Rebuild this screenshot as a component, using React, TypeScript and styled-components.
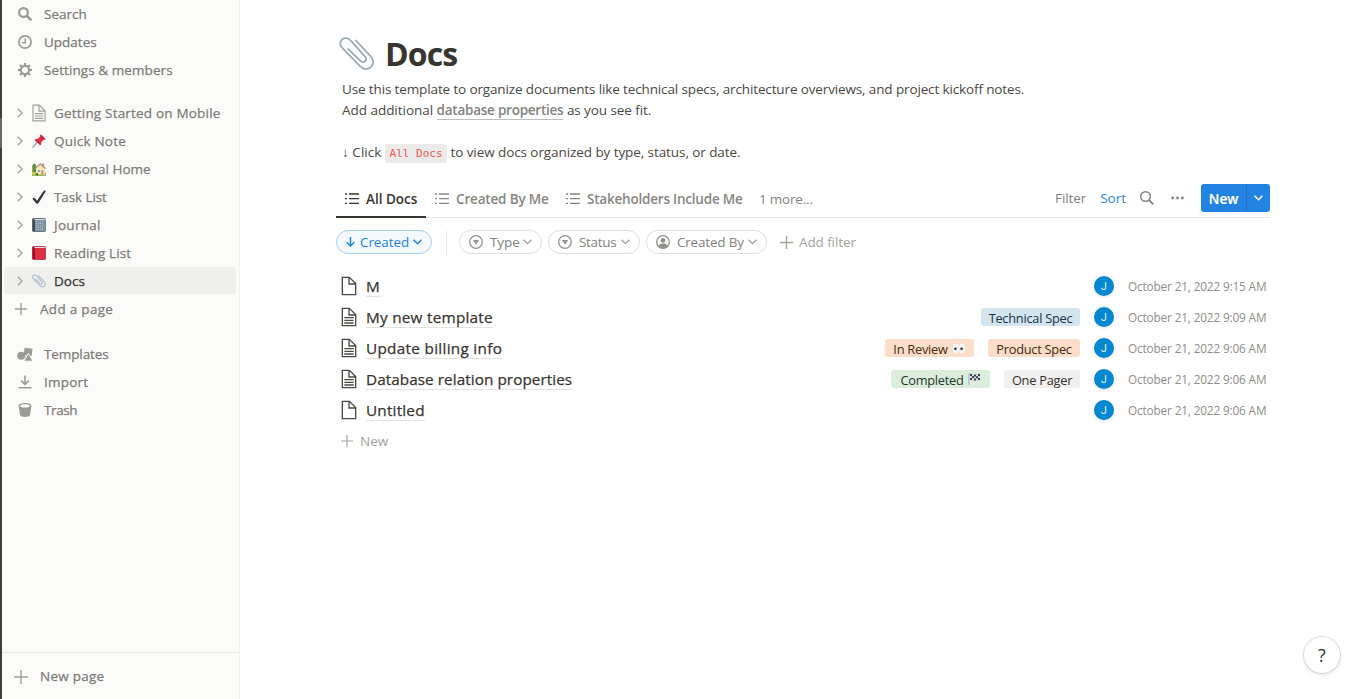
import React from "react";
import styled, { createGlobalStyle, css } from "styled-components";

const GlobalStyle = createGlobalStyle`
  * { box-sizing: border-box; }
  body { margin: 0; background: #fff; overflow: hidden; }
  #root { height: 100vh; }
`;

const sans = `"Segoe UI", "Open Sans", "Noto Sans", sans-serif`;

const medium = css`
  font-weight: 400;
  -webkit-text-stroke: 0.25px currentColor;
`;

const Page = styled.div`
  display: flex;
  width: 100%;
  height: 100vh;
  font-family: ${sans};
  font-size: 13.5px;
  color: #37352f;
  white-space: nowrap;
`;

const Edge = styled.div`
  width: 2px;
  flex: none;
  background: linear-gradient(#3e3e3e 118px, #6a6a6a 118px, #6a6a6a 148px, #3e3e3e 148px);
`;

const Sidebar = styled.aside`
  width: 238px;
  flex: none;
  display: flex;
  flex-direction: column;
  background: #fbfbfa;
  border-right: 1px solid #f1f1f0;
`;

const NavGroup = styled.nav<{ $gap?: number }>`
  display: flex;
  flex-direction: column;
  margin-bottom: ${(p) => p.$gap ?? 0}px;
`;

const NavRow = styled.div<{ $active?: boolean }>`
  display: flex;
  align-items: center;
  height: 28px;
  margin: 0 3px 0 2px;
  border-radius: 3px;
  padding-bottom: 1px;
  ${medium}
  color: ${(p) => (p.$active ? "#37352f" : "#7d7c78")};
  ${(p) => p.$active && css`
    background: #efefee;
    height: 27px;
    margin-bottom: 1px;
    padding-bottom: 0;
  `}
`;

const Text = styled.span<{ $ls?: number }>`
  letter-spacing: ${(p) => p.$ls ?? 0}px;
`;

const NavIcon = styled.span`
  width: 16px;
  margin: 1px 11px 0 13px;
  display: flex;
  justify-content: center;
  color: #9c9b97;
`;

const Toggle = styled.span`
  width: 12px;
  margin: 1px 6px 0 10px;
  display: flex;
  justify-content: center;
  color: #a9a8a4;
`;

const PageIcon = styled.span`
  width: 18px;
  margin: 1px 4px 0 -2px;
  display: flex;
  justify-content: center;
  color: #a3a29e;
  & + span { margin-left: 2px; }
`;

const AddIcon = styled.span<{ $x?: number }>`
  width: 14px;
  margin: 1px ${(p) => 12 - (p.$x ?? 0)}px 0 ${(p) => 10 + (p.$x ?? 0)}px;
  display: flex;
  color: #a09f9b;
`;

const NewPageBar = styled.div`
  margin-top: auto;
  height: 47px;
  border-top: 1px solid #e7e7e5;
  display: flex;
  align-items: center;
  padding-left: 2px;
  ${medium}
  color: #7d7c78;
`;

const Main = styled.main`
  flex: 1;
  padding: 0 83px 0 96px;
  display: flex;
  flex-direction: column;
`;

const TitleRow = styled.header`
  display: flex;
  align-items: center;
  height: 44px;
  margin-top: 32px;
  padding-left: 3px;
`;

const Title = styled.h1`
  margin: 0 0 0 10px;
  font-size: 32px;
  line-height: 44px;
  font-weight: 700;
  letter-spacing: -0.9px;
`;

const Description = styled.p`
  margin: 3px 0 0 6px;
  line-height: 21px;
  color: #4a4843;
`;

const PropLink = styled.a`
  font-weight: 600;
  color: #83827e;
  border-bottom: 1px solid #bfbebc;
  letter-spacing: -0.24px;
`;

const Code = styled.code`
  font-family: Consolas, "DejaVu Sans Mono", monospace;
  font-size: 11px;
  color: #eb5757;
  background: #ecebea;
  border-radius: 3px;
  padding: 3px 4.500px;
`;

const ViewBar = styled.div`
  display: flex;
  align-items: stretch;
  height: 38px;
  margin-top: 16px;
  border-bottom: 1px solid #e9e9e7;
`;

const Tab = styled.div<{ $active?: boolean; $w: number }>`
  display: flex;
  align-items: center;
  width: ${(p) => p.$w}px;
  padding: 2px 0 0 9px;
  gap: 7px;
  font-weight: 600;
  font-size: 13.5px;
  color: ${(p) => (p.$active ? "#37352f" : "#878682")};
  border-bottom: 2px solid ${(p) => (p.$active ? "#37352f" : "transparent")};
  margin-bottom: -1px;
`;

const More = styled.div`
  display: flex;
  align-items: center;
  padding: 1px 0 0 7px;
  color: #83827e;
  letter-spacing: -0.200px;
`;

const Tools = styled.div`
  display: flex;
  align-items: center;
  margin-left: auto;
  padding-bottom: 1px;
  color: #83827e;
`;

const Sort = styled.span`
  color: #2383e2;
  margin: 0 14px;
`;

const MoreDots = styled.svg`
  margin-left: 17px;
`;

const NewButton = styled.div`
  display: flex;
  width: 69px;
  height: 28px;
  margin: 0 0 0 17px;
  border-radius: 3px;
  background: #2383e2;
  color: #fff;
  font-weight: 600;
  overflow: hidden;
`;

const NewLabel = styled.span`
  width: 46px;
  display: flex;
  align-items: center;
  justify-content: center;
  padding-top: 1px;
  -webkit-text-stroke: 0.2px #fff;
  border-right: 1px solid #1d70c2;
`;

const NewCaret = styled.span`
  flex: 1;
  display: flex;
  align-items: center;
  justify-content: center;
`;

const Filters = styled.div`
  display: flex;
  align-items: center;
  height: 24px;
  margin-top: 12px;
  color: #83827e;
`;

const Chip = styled.div<{ $w: number; $on?: boolean }>`
  display: flex;
  align-items: center;
  width: ${(p) => p.$w}px;
  height: 24px;
  margin-right: 6px;
  padding: 0 9px;
  border-radius: 12px;
  border: 1px solid ${(p) => (p.$on ? "#a9cff3" : "#dededc")};
  background: ${(p) => (p.$on ? "#f3f9fd" : "#fff")};
  color: ${(p) => (p.$on ? "#2383e2" : "#83827e")};
  svg { flex: none; }
  span { margin-left: ${(p) => (p.$on ? 5 : 7)}px; }
  svg:last-child { margin-left: auto; opacity: ${(p) => (p.$on ? 1 : 0.75)}; }
`;

const Divider = styled.div`
  width: 1px;
  height: 23px;
  margin: 0 12px 0 8px;
  background: #e6e6e4;
`;

const AddFilter = styled.div`
  display: flex;
  align-items: center;
  gap: 6px;
  margin-left: 7px;
  color: #a5a4a0;
`;

const List = styled.div`
  display: flex;
  flex-direction: column;
  margin-top: 16px;
`;

const Row = styled.div`
  display: flex;
  align-items: center;
  height: 31px;
  padding: 0 4px 0 3px;
`;

const FileGlyph = styled.span`
  display: flex;
  color: #4b4944;
`;

const DocName = styled.span<{ $ls?: number }>`
  margin: 2px 0 0 7px;
  font-size: 15.3px;
  line-height: 20px;
  height: 21px;
  border-bottom: 1px solid #e2e2e0;
  ${medium}
  letter-spacing: ${(p) => p.$ls ?? 0}px;
`;

const Meta = styled.div`
  display: flex;
  align-items: center;
  gap: 14px;
  margin-left: auto;
`;

const Tag = styled.span<{ $bg: string; $fg: string; $w: number }>`
  display: flex;
  align-items: center;
  justify-content: center;
  gap: 4px;
  width: ${(p) => p.$w}px;
  height: 18px;
  padding-top: 2px;
  border-radius: 3px;
  font-size: 12.8px;
  letter-spacing: -0.25px;
  background: ${(p) => p.$bg};
  color: ${(p) => p.$fg};
`;

const Avatar = styled.span`
  width: 20px;
  height: 20px;
  border-radius: 50%;
  background: #0288d1;
  color: #e8f5fc;
  font-family: Roboto, ${sans};
  font-size: 10.500px;
  line-height: 21px;
  text-align: center;
  box-shadow: 0 1px 3px rgba(15, 15, 15, 0.14);
`;

const DateText = styled.time`
  width: 138px;
  padding-top: 1px;
  font-size: 11.8px;
  letter-spacing: -0.15px;
  color: #8f8e8a;
`;

const NewRow = styled.div`
  display: flex;
  align-items: center;
  height: 31px;
  padding: 1px 0 0 5px;
  gap: 7px;
  color: #a5a4a0;
`;

const Help = styled.div`
  position: absolute;
  right: 13px;
  bottom: 26px;
  width: 36px;
  height: 36px;
  border-radius: 50%;
  background: #fff;
  box-shadow: 0 0 0 1px rgba(15, 15, 15, 0.12), 0 2px 4px rgba(15, 15, 15, 0.1);
  display: flex;
  align-items: center;
  justify-content: center;
  font-size: 18px;
`;

const SearchIcon = ({ size = 14, stroke = 2 }: { size?: number; stroke?: number }) => (
  <svg width={size} height={size} viewBox="0 0 14 14" fill="none" stroke="currentColor" strokeWidth={stroke}>
    <circle cx="5.5" cy="5.5" r={5.5 - stroke / 2} />
    <path d="M9 9 13.300 13.300" strokeWidth={stroke + 0.3} />
  </svg>
);

const ClockIcon = () => (
  <svg width="14" height="14" viewBox="0 0 14 14" fill="none" stroke="currentColor" strokeWidth="1.700">
    <circle cx="7" cy="7" r="6.100" />
    <path d="M7.300 3.300v4.400H3.900" strokeWidth="1.500" />
  </svg>
);

const GearIcon = () => (
  <svg width="14" height="14" viewBox="0 0 14 14" fill="none" stroke="currentColor">
    <circle cx="7" cy="7" r="4.100" strokeWidth="2.100" />
    {[0, 45, 90, 135, 180, 225, 270, 315].map((a) => (
      <path key={a} d="M7 0v2.600" strokeWidth="2.200" transform={`rotate(${a} 7 7)`} />
    ))}
  </svg>
);

const TemplatesIcon = () => (
  <svg width="17" height="15" viewBox="0 0 17 15">
    <circle cx="4.600" cy="8.800" r="4.300" fill="currentColor" />
    <path d="M8 .4 16.500 1.400 15.600 9 7.200 8Z" fill="currentColor" />
    <path d="M12.100 6.200 17 14.600H7.200Z" fill="currentColor" stroke="#fbfbfa" strokeWidth="1" />
  </svg>
);

const ImportIcon = () => (
  <svg width="14" height="14" viewBox="0 0 14 14" fill="none" stroke="currentColor" strokeWidth="1.600">
    <path d="M7 .6v8.600M3.200 5.600 7 9.300l3.800-3.700M.6 12.700h12.800" />
  </svg>
);

const TrashIcon = () => (
  <svg width="14" height="14" viewBox="0 0 14 14" fill="currentColor">
    <path fillRule="evenodd" d="M7 0C3.400 0 .6 1 .6 2.700L1.900 11.800C2.100 13.200 4 14 7 14s4.900-.8 5.100-2.200L13.400 2.700C13.400 1 10.600 0 7 0ZM7 1.300c2.800 0 4.900.7 4.900 1.600S9.800 4.500 7 4.500 2.100 3.800 2.100 2.900 4.200 1.300 7 1.300Z" />
  </svg>
);

const PlusIcon = ({ size = 12, stroke = 1.4 }: { size?: number; stroke?: number }) => (
  <svg width={size} height={size} viewBox="0 0 12 12" stroke="currentColor" strokeWidth={stroke}>
    <path d="M6 0v12M0 6h12" />
  </svg>
);

const ChevronRight = () => (
  <svg width="6" height="10" viewBox="0 0 6 10" fill="none" stroke="currentColor" strokeWidth="1.500">
    <path d="M.8.8 5 5 .8 9.200" />
  </svg>
);

const ChevronDown = ({ stroke = 1.3 }: { stroke?: number }) => (
  <svg width="9" height="6" viewBox="0 0 9 6" fill="none" stroke="currentColor" strokeWidth={stroke}>
    <path d="M.5.7 4.500 4.700 8.500.7" />
  </svg>
);

const ListIcon = () => (
  <svg width="14" height="12" viewBox="0 0 14 12" stroke="currentColor" strokeWidth="1.300">
    <path d="M0 1h2M0 5.700h2M0 10.400h2M4 1h10M4 5.700h10M4 10.400h10" />
  </svg>
);

const FileIcon = ({ size = 20, lines = true }: { size?: number; lines?: boolean }) => (
  <svg width={size} height={size} viewBox="0 0 30 30" fill="currentColor">
    <path d="M16,1H4v28h22V11L16,1z M16,3.828L23.172,11H16V3.828z M24,27H6V3h8v10h10V27z" />
    {lines && <path d="M8,17h14v-2H8V17z M8,21h14v-2H8V21z M8,25h14v-2H8V25z" />}
  </svg>
);

const SelectIcon = () => (
  <svg width="14" height="14" viewBox="0 0 14 14" opacity="0.85">
    <circle cx="7" cy="7" r="6.300" fill="none" stroke="currentColor" strokeWidth="1.300" />
    <path d="M3.900 4.900h6.200L7 9.800Z" fill="currentColor" />
  </svg>
);

const PersonIcon = () => (
  <svg width="14" height="14" viewBox="0 0 14 14" opacity="0.9">
    <circle cx="7" cy="7" r="6.300" fill="none" stroke="currentColor" strokeWidth="1.300" />
    <circle cx="7" cy="5.400" r="2.300" fill="currentColor" />
    <path d="M2.600 11C3.300 9.200 5 8.600 7 8.600s3.700.6 4.400 2.400C10.300 12.300 8.800 13 7 13s-3.300-.7-4.400-2Z" fill="currentColor" />
  </svg>
);

const ArrowDown = () => (
  <svg width="9" height="10" viewBox="0 0 9 10" fill="none" stroke="currentColor" strokeWidth="1.500">
    <path d="M4.500 0v9M.7 5.200l3.800 3.800 3.800-3.800" />
  </svg>
);

const PushPin = () => (
  <svg width="14" height="14" viewBox="0 0 14 14">
    <path d="M.5 13.500 6 7.200" stroke="#8fa3b0" strokeWidth="1.300" />
    <path d="M9 .3 13.700 4.900 12.600 6 11.700 5.700 9.300 8.100 9.200 10.600 8.100 11.300 2.600 5.900 3.500 4.900 6 4.700 8.300 2.300 8 1.300Z" fill="#dd2e44" />
    <path d="M3.400 5.700 8.300 10.500M8.800 2.400l2.800 2.800" stroke="#a51d34" strokeWidth=".8" />
  </svg>
);

const HouseGarden = () => (
  <svg width="14" height="14" viewBox="0 0 14 14">
    <path d="M0 10.500h14V14H0Z" fill="#8fbd5f" />
    <path d="M.3 3.500C1.500 1 3.800 1.500 4 3.500v7H.3Z" fill="#5c913b" />
    <path d="M4 6.500 8.500 3 13 6.500V12.500H4Z" fill="#f8e8b4" />
    <path d="M2.800 6.600 8.200 2l5.500 4.600" fill="none" stroke="#b09a8a" strokeWidth="1.400" />
    <path d="M10.200 1.500h1.600v3h-1.600Z" fill="#a0856a" />
    <path d="M6 8h1.800v2H6Z" fill="#55acee" />
    <path d="M9.300 8.200h2v4.300h-2Z" fill="#c5946c" />
    <circle cx="1.800" cy="11.600" r="1.500" fill="#f0c340" />
    <circle cx="5" cy="12.300" r="1.200" fill="#3e721d" />
  </svg>
);

const CheckMark = () => (
  <svg width="14" height="14" viewBox="0 0 14 14">
    <path d="M.4 8.700C1.200 7.500 2.500 7.500 3.200 8.500L5 10.800 11.800.8C12.500.1 14 .6 13.500 1.700L6.500 13C5.800 14 4.500 13.900 3.900 13Z" fill="#31373d" />
  </svg>
);

const Book = ({ cover, spine, pattern }: { cover: string; spine: string; pattern?: boolean }) => (
  <svg width="14" height="14" viewBox="0 0 14 14">
    <rect x=".2" y=".3" width="13.500" height="13.400" rx="1.300" fill={spine} />
    <path d="M2.600.9H13v1.400H2Z" fill="#d9e1e6" />
    <path d="M2.900 2.100h10.400v11H2.900Z" fill={cover} />
    {pattern && <path d="M4 3.500h8M4 5.500h8M4 7.500h8M4 9.500h8M4 11.500h8" stroke="#aab8c2" strokeWidth="1" strokeDasharray="1 1" />}
  </svg>
);

const PaperClip = ({ size, stroke, color }: { size: number; stroke: number; color: string }) => (
  <svg width={size} height={size} viewBox="0 0 36 36" fill="none" stroke={color} strokeWidth={stroke} strokeLinecap="round">
    <path d="M9.200 13.200 22 25.300c2.600 2.300 6.800-1.600 4.200-4.400L12.300 5.200C9.300 1.500 5 1.200 2.800 3.800.4 6.500 1 9.600 3.700 12.300L20.500 29.700c4 4.300 8.400 4.300 11.500 1.200 3-3.200 2.900-7.500-.7-11.100L16.800 4.500" />
  </svg>
);

const Eyes = () => (
  <svg width="14" height="12" viewBox="0 0 13 12">
    <ellipse cx="3.300" cy="5.500" rx="3.100" ry="4.900" fill="#f5f6f7" />
    <ellipse cx="9.700" cy="5.500" rx="3.100" ry="4.900" fill="#f5f6f7" />
    <circle cx="2.900" cy="5.800" r="1.400" fill="#3a4045" />
    <circle cx="9.100" cy="5.800" r="1.400" fill="#3a4045" />
  </svg>
);

const Flag = () => (
  <svg width="13" height="13" viewBox="0 0 13 13">
    <path d="M.9 0v12" stroke="#a3b1bb" strokeWidth="1" />
    <path d="M1.500.3C4-.7 5.500 1.800 8 .9c1.400-.5 2.500-.6 4-.2L12.300 8.100C9 7.300 8 9.100 5.500 8.100 4 7.500 2.800 7.700 1.500 8.100Z" fill="#d5dbe0" />
    <path d="M2 1h2v2H2zM6 1.600h2v2H6zM10 1h2v2h-2zM4 3h2v2H4zM8 3.200h2v2H8zM2 5h2v2H2zM6 5.400h2v2H6zM10 5h2v2h-2z" fill="#3a4045" />
  </svg>
);

const pages = [
  { name: "Getting Started on Mobile", icon: <FileIcon size={18} />, ls: 0.19 },
  { name: "Quick Note", icon: <PushPin />, ls: 0.2 },
  { name: "Personal Home", icon: <HouseGarden />, ls: 0 },
  { name: "Task List", icon: <CheckMark />, ls: -0.1 },
  { name: "Journal", icon: <Book cover="#8096a5" spine="#3b4750" pattern />, ls: 0.3 },
  { name: "Reading List", icon: <Book cover="#dd2e44" spine="#a0041e" />, ls: 0.1 },
  { name: "Docs", icon: <PaperClip size={14} stroke={3} color="#b3c0ca" />, ls: 0, active: true },
];

const colors = {
  blue: { $bg: "#d3e5ef", $fg: "#183347" },
  orange: { $bg: "#fadec9", $fg: "#49290e" },
  green: { $bg: "#dbeddb", $fg: "#1c3829" },
  gray: { $bg: "#f1f0ef", $fg: "#32302c" },
};

type TagData = { label: string; color: keyof typeof colors; w: number; icon?: React.ReactNode };
const docs: { name: string; lines: boolean; time: string; ls?: number; tags: TagData[] }[] = [
  { name: "M", lines: false, time: "9:15 AM", ls: 1.2, tags: [] },
  { name: "My new template", lines: true, time: "9:09 AM", ls: 0.25, tags: [{ label: "Technical Spec", color: "blue", w: 99 }] },
  {
    name: "Update billing info", lines: true, time: "9:06 AM", ls: 0.3,
    tags: [{ label: "In Review", color: "orange", w: 89, icon: <Eyes /> }, { label: "Product Spec", color: "orange", w: 92 }],
  },
  {
    name: "Database relation properties", lines: true, time: "9:06 AM", ls: 0.06,
    tags: [{ label: "Completed", color: "green", w: 99, icon: <Flag /> }, { label: "One Pager", color: "gray", w: 76 }],
  },
  { name: "Untitled", lines: false, time: "9:06 AM", ls: 0.2, tags: [] },
];

export default function App() {
  return (
    <Page>
      <GlobalStyle />
      <Edge />
      <Sidebar>
        <NavGroup $gap={15}>
          <NavRow><NavIcon><SearchIcon stroke={2.2} /></NavIcon><Text>Search</Text></NavRow>
          <NavRow><NavIcon><ClockIcon /></NavIcon><Text>Updates</Text></NavRow>
          <NavRow><NavIcon><GearIcon /></NavIcon><Text $ls={0.08}>Settings &amp; members</Text></NavRow>
        </NavGroup>
        <NavGroup $gap={17}>
          {pages.map((p) => (
            <NavRow key={p.name} $active={p.active}>
              <Toggle><ChevronRight /></Toggle>
              <PageIcon>{p.icon}</PageIcon>
              <Text $ls={p.ls}>{p.name}</Text>
            </NavRow>
          ))}
          <NavRow><AddIcon $x={1}><PlusIcon /></AddIcon><Text $ls={0.3}>Add a page</Text></NavRow>
        </NavGroup>
        <NavGroup>
          <NavRow><NavIcon><TemplatesIcon /></NavIcon><Text $ls={-0.1}>Templates</Text></NavRow>
          <NavRow><NavIcon><ImportIcon /></NavIcon><Text $ls={0.2}>Import</Text></NavRow>
          <NavRow><NavIcon><TrashIcon /></NavIcon><Text $ls={-0.4}>Trash</Text></NavRow>
        </NavGroup>
        <NewPageBar><AddIcon><PlusIcon size={14} stroke={1.2} /></AddIcon><Text $ls={0.25}>New page</Text></NewPageBar>
      </Sidebar>
      <Main>
        <TitleRow>
          <PaperClip size={36} stroke={1.8} color="#99aab5" />
          <Title>Docs</Title>
        </TitleRow>
        <Description>
          <Text $ls={-0.132}>Use this template to organize documents like technical specs, architecture overviews, and project kickoff notes.</Text>
          <br />
          <Text $ls={-0.03}>Add additional </Text><PropLink>database properties</PropLink><Text $ls={-0.08}> as you see fit.</Text>
          <br />
          <br />
          <Text $ls={0.05}>↓ Click </Text><Code>All Docs</Code><Text $ls={-0.08}> to view docs organized by type, status, or date.</Text>
        </Description>
        <ViewBar>
          <Tab $active $w={90}><ListIcon /><Text>All Docs</Text></Tab>
          <Tab $w={131}><ListIcon /><Text $ls={-0.17}>Created By Me</Text></Tab>
          <Tab $w={195}><ListIcon /><Text $ls={-0.21}>Stakeholders Include Me</Text></Tab>
          <More>1 more...</More>
          <Tools>
            <Text $ls={-0.1}>Filter</Text>
            <Sort>Sort</Sort>
            <SearchIcon stroke={1.5} />
            <MoreDots width="13" height="4" viewBox="0 0 13 4" fill="currentColor">
              <circle cx="1.600" cy="2" r="1.400" /><circle cx="6.500" cy="2" r="1.400" /><circle cx="11.400" cy="2" r="1.400" />
            </MoreDots>
            <NewButton>
              <NewLabel>New</NewLabel>
              <NewCaret><ChevronDown stroke={1.5} /></NewCaret>
            </NewButton>
          </Tools>
        </ViewBar>
        <Filters>
          <Chip $w={96} $on><ArrowDown /><Text $ls={-0.1}>Created</Text><ChevronDown stroke={1.5} /></Chip>
          <Divider />
          <Chip $w={83}><SelectIcon /><Text $ls={-0.1}>Type</Text><ChevronDown /></Chip>
          <Chip $w={92}><SelectIcon /><Text $ls={-0.3}>Status</Text><ChevronDown /></Chip>
          <Chip $w={121}><PersonIcon /><Text $ls={-0.2}>Created By</Text><ChevronDown /></Chip>
          <AddFilter><PlusIcon size={13} stroke={1.3} /><Text $ls={-0.1}>Add filter</Text></AddFilter>
        </Filters>
        <List>
          {docs.map((d) => (
            <Row key={d.name}>
              <FileGlyph><FileIcon lines={d.lines} /></FileGlyph>
              <DocName $ls={d.ls}>{d.name}</DocName>
              <Meta>
                {d.tags.map((t) => (
                  <Tag key={t.label} $w={t.w} {...colors[t.color]}>{t.label}{t.icon}</Tag>
                ))}
                <Avatar>J</Avatar>
                <DateText>October 21, 2022 {d.time}</DateText>
              </Meta>
            </Row>
          ))}
          <NewRow><PlusIcon stroke={1.2} /><Text>New</Text></NewRow>
        </List>
      </Main>
      <Help>?</Help>
    </Page>
  );
}
